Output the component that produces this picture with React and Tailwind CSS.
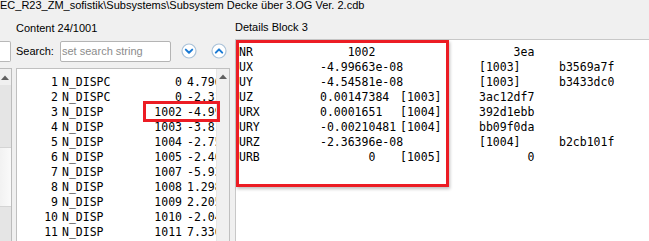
import React from "react";

const listRows = [
  ["1", "N_DISPC", "0", "4.79663e-08"],
  ["2", "N_DISPC", "0", "-2.31452e-08"],
  ["3", "N_DISP", "1002", "-4.99663e-08"],
  ["4", "N_DISP", "1003", "-3.81207e-08"],
  ["5", "N_DISP", "1004", "-2.75512e-08"],
  ["6", "N_DISP", "1005", "-2.40118e-08"],
  ["7", "N_DISP", "1007", "-5.93377e-08"],
  ["8", "N_DISP", "1008", "1.29841e-08"],
  ["9", "N_DISP", "1009", "2.20563e-08"],
  ["10", "N_DISP", "1010", "-2.04419e-08"],
  ["11", "N_DISP", "1011", "7.33021e-08"],
];

// label | value | col3 | col4 | col5
const detailRows = [
  ["NR", "    1002", "", "     3ea", ""],
  ["UX", "-4.99663e-08", "", "[1003]", "b3569a7f"],
  ["UY", "-4.54581e-08", "", "[1003]", "b3433dc0"],
  ["UZ", "0.00147384", "[1003]", "3ac12df7", ""],
  ["URX", "0.0001651", "[1004]", "392d1ebb", ""],
  ["URY", "-0.00210481", "[1004]", "bb09f0da", ""],
  ["URZ", "-2.36396e-08", "", "[1004]", "b2cb101f"],
  ["URB", "       0", "[1005]", "       0", ""],
];

const ui = "font-['Liberation_Sans','Noto_Sans',sans-serif]";
const mono = "font-['DejaVu_Sans_Mono','Liberation_Mono',monospace] text-[11.5px]";

function RoundButton({ up }) {
  return (
    <svg width="16" height="16" viewBox="0 0 16 16">
      <circle cx="8" cy="8" r="7" fill="#fff" stroke="#aac2d8" strokeWidth="1.2" />
      <path
        d={up ? "M4.8 9.6 L8 6.4 L11.2 9.6" : "M4.8 6.6 L8 9.8 L11.2 6.6"}
        fill="none"
        stroke="#1a7ad4"
        strokeWidth="2"
        strokeLinecap="round"
        strokeLinejoin="round"
      />
    </svg>
  );
}

function UpArrow() {
  return (
    <svg width="8" height="5" viewBox="0 0 8 5">
      <path d="M0 5 L4 0.5 L8 5 Z" fill="#606060" />
    </svg>
  );
}

export default function App() {
  return (
    <div className={`w-[649px] h-[241px] overflow-hidden bg-[#f0f0f0] text-black flex flex-col ${ui}`}>
      {/* window title */}
      <div className="h-[14px] shrink-0 overflow-hidden">
        <div className="text-[11px] leading-[12px] -mt-[1px] whitespace-nowrap">
          EC_R23_ZM_sofistik\Subsystems\Subsystem Decke über 3.OG Ver. 2.cdb
        </div>
      </div>

      <div className="flex flex-1 min-h-0">
        {/* remains of the panel on the left */}
        <div className="w-[12px] flex flex-col shrink-0">
          <div className="h-[27px]" />
          <div className="h-[21px] w-[11px] bg-white border border-l-0 border-[#b8b8b8] rounded-r-[2px]" />
          <div className="mt-[6px] flex-1 w-[12px] border-t border-r border-[#bcbcbc] flex flex-col">
            <div className="h-[16px] bg-[#f0f0f0] flex items-center pl-[1px]">
              <UpArrow />
            </div>
            <div className="h-[62px] bg-[#e5e5e5]" />
            <div className="h-[60px] bg-gradient-to-r from-[#f2f2f2] to-[#fafafa] border-y border-[#d4d4d4]" />
            <div className="flex-1 bg-[#e5e5e5]" />
          </div>
        </div>

        {/* content list */}
        <div className="ml-[4px] w-[214px] flex flex-col shrink-0">
          <div className="h-[16px] mt-[6px] text-[11px] leading-[16px]">Content 24/1001</div>
          <div className="mt-[5px] h-[20px] flex items-center">
            <span className="w-[44px] text-[11px]">Search:</span>
            <input
              className="w-[111px] h-[21px] bg-white border border-[#b4b4b4] rounded-[2px] px-[1px] text-[11px] outline-none placeholder:text-[#8c8c8c]"
              placeholder="set search string"
            />
            <div className="ml-[10px] flex gap-[14px]">
              <RoundButton />
              <RoundButton up />
            </div>
          </div>
          <div className="relative mt-[7px] flex-1 flex border-t border-l border-r border-[#c0c0c0] bg-white">
            <div className={`flex-1 overflow-hidden pt-[6px] ${mono}`}>
              {listRows.map(([i, name, id, val]) => (
                <div key={i} className="h-[15px] leading-[15px] flex whitespace-nowrap">
                  <span className="w-[41px] shrink-0 text-right">{i}</span>
                  <span className="w-[60px] shrink-0 pl-[4px]">{name}</span>
                  <span className="w-[64px] shrink-0 text-right">{id}</span>
                  <span className="pl-[5px]">{val}</span>
                </div>
              ))}
            </div>
            <div className="w-[13px] shrink-0 bg-[#f0f0f0] border-l border-[#e6e6e6] flex flex-col">
              <div className="h-[15px] flex items-center justify-center">
                <UpArrow />
              </div>
            </div>
            <div className="absolute left-[126px] top-[32px] w-[77px] h-[21px] border-[3px] border-[#ec1c24]" />
          </div>
        </div>

        {/* details */}
        <div className="ml-[5px] flex-1 flex flex-col min-w-0">
          <div className="h-[16px] mt-[5px] text-[11px] leading-[16px]">Details Block 3</div>
          <div className="relative mt-[4px] flex-1 bg-white border-t border-l border-[#c8c8c8] pt-[5px] pl-[3px]">
            <div className={mono}>
              {detailRows.map((r) => (
                <div key={r[0]} className="h-[15px] leading-[15px] grid grid-cols-[81px_80px_79px_80px_1fr] whitespace-pre">
                  {r.map((c, k) => (
                    <span key={k}>{c}</span>
                  ))}
                </div>
              ))}
            </div>
            <div className="absolute left-0 top-0 w-[213px] h-[147px] border-[3px] border-[#ec1c24] shadow-[1px_2px_3px_rgba(0,0,0,0.25)]" />
          </div>
        </div>
      </div>
    </div>
  );
}
